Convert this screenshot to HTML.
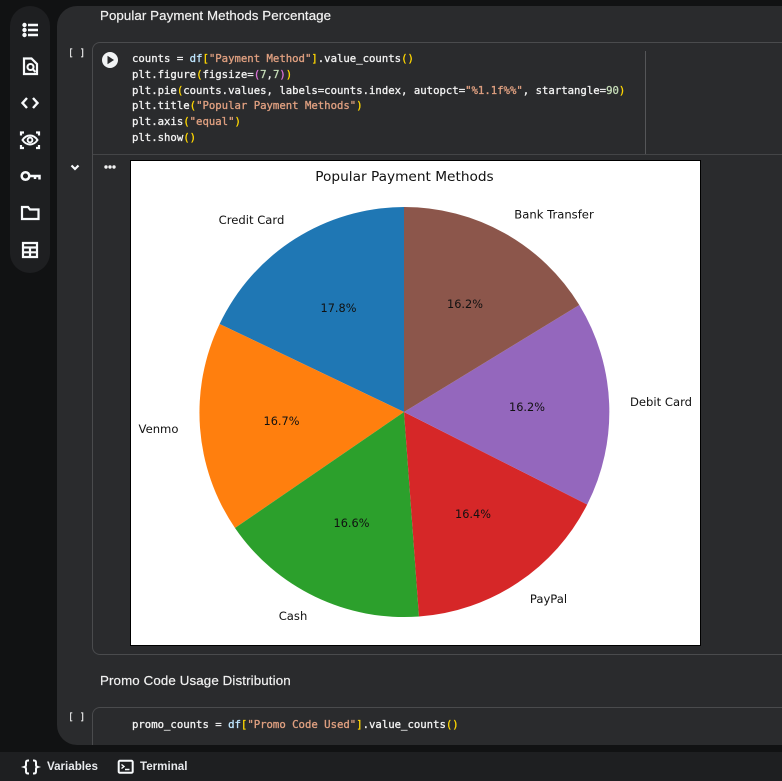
<!DOCTYPE html>
<html>
<head>
<meta charset="utf-8">
<style>
html,body{margin:0;padding:0;background:#111213;width:782px;height:781px;overflow:hidden}
*{box-sizing:border-box}
.abs{position:absolute}
#rail{left:10px;top:6px;width:40px;height:267px;background:#1e1f21;border-radius:20px}
#main{left:57px;top:6px;width:760px;height:739px;background:#2a2b2d;border-radius:20px;overflow:hidden}
#bottom{left:0;top:752px;width:782px;height:29px;background:#1e1f21}
.h{font-family:"Liberation Sans",sans-serif;font-size:13.3px;color:#f1f1f1;line-height:18px;white-space:nowrap;-webkit-text-stroke:.2px #f1f1f1}
.code{font-family:"DejaVu Sans Mono","Liberation Mono",monospace;font-size:10.65px;line-height:15.8px;color:#f2f2f2;white-space:pre;-webkit-text-stroke:.3px currentColor}
.s{color:#e0a080}.y{color:#ffd700}.p{color:#da70d6}.n{color:#c5dcb8}.b{color:#bfe6ff}
.cell{left:92px;width:720px;border:1px solid #4a4b4d;border-radius:8px 0 0 8px;border-right:none}
.br{font-family:"DejaVu Sans Mono",monospace;font-size:9.5px;color:#e8e8e8;white-space:pre;line-height:10px;-webkit-text-stroke:.2px #e8e8e8}
.tb{font-family:"Liberation Sans",sans-serif;font-size:11.6px;font-weight:bold;color:#e8eaed;line-height:14px;white-space:nowrap}
</style>
</head>
<body>
<div class="abs" id="rail"></div>
<div class="abs" id="main"></div>
<div class="abs" id="bottom"></div>

<svg class="abs" style="left:0;top:0" width="90" height="280" fill="none" stroke="#f8fafc" stroke-width="2.400">
  <!-- list -->
  <circle cx="24.500" cy="25" r="2.200" fill="#f8fafc" stroke="none"/><circle cx="24.500" cy="30" r="2.200" fill="#f8fafc" stroke="none"/><circle cx="24.500" cy="35" r="2.200" fill="#f8fafc" stroke="none"/>
  <path d="M28 25H38M28 30H38M28 35H38"/>
  <!-- doc search -->
  <path d="M24 58.500h7.500l5.500 5.500v10h-13z" stroke-width="2.200"/>
  <circle cx="30.500" cy="67" r="3" stroke-width="2.100"/><path d="M32.500 69l3 3" stroke-width="2.100"/>
  <!-- code -->
  <path d="M27 98l-4.500 5 4.500 5M33 98l4.500 5-4.500 5" stroke-width="2.400"/>
  <!-- eye frame -->
  <path d="M21 135.500v-3h3M36 132.500h3v3M39 145v3h-3M24 148h-3v-3" stroke-width="2.200"/>
  <path d="M22.500 140c4-6 11-6 15 0-4 6-11 6-15 0z" stroke-width="2"/>
  <circle cx="30" cy="140" r="2.400" stroke-width="1.900"/>
  <!-- key -->
  <circle cx="25.500" cy="176" r="3.800" stroke-width="2.500"/>
  <path d="M29.500 176H39.500v3.500M35 176v3" stroke-width="2.500"/>
  <!-- folder -->
  <path d="M22 207h6l2 2.500h8.500V219H22z" stroke-width="2.200"/>
  <!-- table -->
  <path d="M23 243h14v14H23zM23 247.500h14M23 252.300h14M30 247.500V257" stroke-width="2.200"/>
  <!-- cell chevron -->
  <path d="M71.500 165.500l3.500 3.500 3.500-3.500" stroke-width="2.200"/>
</svg>

<div class="abs h" style="left:100px;top:7px;letter-spacing:.08px">Popular Payment Methods Percentage</div>
<div class="abs br" style="left:68px;top:49px">[ ]</div>

<div class="abs cell" style="top:42px;height:613px"></div>
<div class="abs" style="left:93px;top:154px;width:689px;height:1px;background:#444547"></div>
<div class="abs" style="left:645px;top:51px;width:1px;height:103px;background:#555658"></div>

<svg class="abs" style="left:100px;top:50px" width="20" height="20">
  <circle cx="10" cy="10" r="8" fill="#f1f3f4"/><path d="M7.500 5.800v8.400l6.500-4.200z" fill="#2a2b2d"/>
</svg>

<div class="abs code" style="left:132px;top:51px">counts = <span class="b">df</span><span class="y">[</span><span class="s">"Payment Method"</span><span class="y">]</span>.value_counts<span class="y">()</span>
plt.figure<span class="y">(</span>figsize=<span class="p">(</span><span class="n">7</span>,<span class="n">7</span><span class="p">)</span><span class="y">)</span>
plt.pie<span class="y">(</span>counts.values, labels=counts.index, autopct=<span class="s">"%1.1f%%"</span>, startangle=<span class="n">90</span><span class="y">)</span>
plt.title<span class="y">(</span><span class="s">"Popular Payment Methods"</span><span class="y">)</span>
plt.axis<span class="y">(</span><span class="s">"equal"</span><span class="y">)</span>
plt.show<span class="y">()</span></div>

<svg class="abs" style="left:103px;top:164px" width="14" height="6"><circle cx="3" cy="3" r="1.700" fill="#f4f4f4"/><circle cx="7" cy="3" r="1.700" fill="#f4f4f4"/><circle cx="11" cy="3" r="1.700" fill="#f4f4f4"/></svg>

<svg class="abs" style="left:130px;top:160px" width="571" height="486" viewBox="130 160 571 486">
  <rect x="130.500" y="160.500" width="570" height="485" fill="#fff" stroke="#000"/>
  <path d="M404 412V207A205 205 0 0 0 219.600 324A205 205 0 0 0 219.600 324Z" fill="#1f77b4"/>
  <path d="M404 412L219.600 324A205 205 0 0 0 235 528Z" fill="#ff7f0e"/>
  <path d="M404 412L235 528A205 205 0 0 0 419 616.500Z" fill="#2ca02c"/>
  <path d="M404 412L419 616.500A205 205 0 0 0 587.200 504.500Z" fill="#d62728"/>
  <path d="M404 412L587.200 504.500A205 205 0 0 0 579.300 305Z" fill="#9467bd"/>
  <path d="M404 412L579.300 305A205 205 0 0 0 404 207Z" fill="#8c564b"/>
  <g font-family="'DejaVu Sans',sans-serif" font-size="11.600" fill="#111" text-anchor="middle">
    <text x="404.500" y="181" font-size="13.700">Popular Payment Methods</text>
    <text x="251.500" y="224">Credit Card</text>
    <text x="158.500" y="433">Venmo</text>
    <text x="293" y="620">Cash</text>
    <text x="548.500" y="603">PayPal</text>
    <text x="661" y="406">Debit Card</text>
    <text x="554" y="218.500">Bank Transfer</text>
    <text x="338.500" y="312" font-size="11.300">17.8%</text>
    <text x="281.500" y="425" font-size="11.300">16.7%</text>
    <text x="351.500" y="527" font-size="11.300">16.6%</text>
    <text x="473" y="518" font-size="11.300">16.4%</text>
    <text x="527" y="411" font-size="11.300">16.2%</text>
    <text x="465" y="308" font-size="11.300">16.2%</text>
  </g>
</svg>

<div class="abs h" style="left:100px;top:672px;letter-spacing:.13px">Promo Code Usage Distribution</div>
<div class="abs br" style="left:68px;top:713px">[ ]</div>
<div class="abs" style="left:92px;top:707px;width:690px;height:38px;border-top:1px solid #4a4b4d;border-left:1px solid #4a4b4d;border-radius:8px 0 0 0"></div>
<div class="abs code" style="left:132px;top:717px">promo_counts = <span class="b">df</span><span class="y">[</span><span class="s">"Promo Code Used"</span><span class="y">]</span>.value_counts<span class="y">()</span></div>

<svg class="abs" style="left:20px;top:757px" width="120" height="20" fill="none" stroke="#f8fafc" stroke-width="2">
  <path d="M9 3.500H8c-1.500 0-2 .8-2 2v2.500c0 1-.6 1.700-1.600 2 1 .3 1.600 1 1.600 2v2.500c0 1.200.5 2 2 2h1"/>
  <path d="M13 3.500h1c1.500 0 2 .8 2 2v2.500c0 1 .6 1.700 1.600 2-1 .3-1.600 1-1.600 2v2.500c0 1.200-.5 2-2 2h-1"/>
  <rect x="98.700" y="3.800" width="14" height="12" rx="1.200"/>
  <path d="M101.500 7.500l2.500 2-2.500 2M105 12.500h4.500" stroke-width="1.400"/>
</svg>
<div class="abs tb" style="left:47px;top:760px">Variables</div>
<div class="abs tb" style="left:140px;top:760px">Terminal</div>
</body>
</html>
